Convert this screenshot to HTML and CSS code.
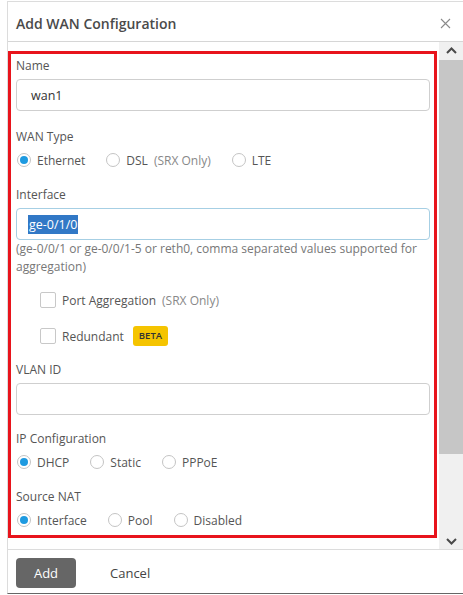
FILE: index.html
```html
<!DOCTYPE html>
<html lang="en">
<head>
    <meta charset="UTF-8">
    <meta name="viewport" content="width=device-width, initial-scale=1.0">
    <title>Add WAN Configuration</title>
    <link rel="stylesheet" href="styles.css">
</head>
<body>
    <div class="dialog">
        <!-- Cabecera -->
        <div class="dialog-header">
            <h2>Add WAN Configuration</h2>
            <span class="close">
                <svg width="11" height="11" viewBox="0 0 11 11"><path d="M1 1L10 10M10 1L1 10" stroke="#8a8a8a" stroke-width="1.1" fill="none"/></svg>
            </span>
        </div>

        <!-- Cuerpo con scroll -->
        <div class="dialog-body">
            <div class="scroll-content">
                <div class="form-box">
                    <div class="field name-field">
                        <div class="field-label">Name</div>
                        <div class="text-input">wan1</div>
                    </div>

                    <div class="field radio-field wan-type">
                        <div class="field-label">WAN Type</div>
                        <div class="radio-group">
                            <span class="radio-option"><span class="radio checked"></span>Ethernet</span>
                            <span class="radio-option"><span class="radio"></span>DSL <span class="note">(SRX Only)</span></span>
                            <span class="radio-option"><span class="radio"></span>LTE</span>
                        </div>
                    </div>

                    <div class="field-label">Interface</div>
                    <div class="text-input focused"><span class="selected">ge-0/1/0</span></div>
                    <div class="help">(ge-0/0/1 or ge-0/0/1-5 or reth0, comma separated values supported for aggregation)</div>

                    <div class="check-group">
                        <div class="check-option"><span class="checkbox"></span>Port Aggregation <span class="note">(SRX Only)</span></div>
                        <div class="check-option"><span class="checkbox"></span>Redundant <span class="badge">BETA</span></div>
                    </div>

                    <div class="field">
                        <div class="field-label">VLAN ID</div>
                        <div class="text-input"></div>
                    </div>

                    <div class="field radio-field">
                        <div class="field-label">IP Configuration</div>
                        <div class="radio-group">
                            <span class="radio-option"><span class="radio checked"></span>DHCP</span>
                            <span class="radio-option"><span class="radio"></span>Static</span>
                            <span class="radio-option"><span class="radio"></span>PPPoE</span>
                        </div>
                    </div>

                    <div class="field radio-field last">
                        <div class="field-label">Source NAT</div>
                        <div class="radio-group">
                            <span class="radio-option"><span class="radio checked"></span>Interface</span>
                            <span class="radio-option"><span class="radio"></span>Pool</span>
                            <span class="radio-option"><span class="radio"></span>Disabled</span>
                        </div>
                    </div>
                </div>
            </div>

            <!-- Barra de scroll -->
            <div class="scrollbar">
                <div class="sb-arrow">
                    <svg width="11" height="7" viewBox="0 0 11 7"><path d="M1 6L5.5 1.5L10 6" stroke="#4a4a4a" stroke-width="2" fill="none"/></svg>
                </div>
                <div class="sb-track"><div class="sb-thumb"></div></div>
                <div class="sb-arrow">
                    <svg width="11" height="7" viewBox="0 0 11 7"><path d="M1 1L5.5 5.5L10 1" stroke="#4a4a4a" stroke-width="2" fill="none"/></svg>
                </div>
            </div>
        </div>

        <!-- Pie -->
        <div class="dialog-footer">
            <button class="btn-add">Add</button>
            <button class="btn-cancel">Cancel</button>
        </div>
    </div>
</body>
</html>
```
FILE: styles.css
```css
body {
    margin: 0;
    background: #ffffff;
    font-family: "Open Sans", "Liberation Sans", sans-serif;
    font-size: 12px;
    color: #555;
}

.dialog {
    margin: 1px 0 0 7px;
    border: 1px solid #dcdcdc;
    border-right: none;
    border-bottom-color: #666;
}

/* Cabecera */
.dialog-header {
    display: flex;
    align-items: center;
    justify-content: space-between;
    padding: 3px 12px 0 8px;
    box-sizing: border-box;
    height: 40px;
    border-bottom: 1px solid #d6d6d6;
}

.dialog-header h2 {
    margin: 0;
    font-size: 14px;
    font-weight: 600;
    color: #4a4a4a;
}

.close {
    display: flex;
}

/* Cuerpo */
.dialog-body {
    display: flex;
    height: 507px;
    border-bottom: 1px solid #dcdcdc;
}

.scroll-content {
    flex: 1;
    padding: 9px 2px 0 0;
    overflow: hidden;
}

.form-box {
    border: 3px solid #e8141c;
    padding: 3px 4px 5px 5px;
}

.field {
    margin-bottom: 15px;
}

.name-field {
    margin-bottom: 17px;
}

.radio-field {
    margin-bottom: 16px;
}

.wan-type {
    margin-bottom: 16px;
}

.radio-field.last {
    margin-bottom: 0;
}

.field-label {
    line-height: 18px;
    margin-bottom: 4px;
    color: #555;
}

.text-input {
    height: 30px;
    border: 1px solid #cfcfcf;
    border-radius: 4px;
    padding: 0 14px;
    display: flex;
    align-items: center;
    color: #333;
    font-size: 12.5px;
}

.text-input.focused {
    border-color: #a6cfe4;
    padding-left: 11px;
}

.selected {
    background: #3178c6;
    color: #fff;
    padding: 1px 1px;
}

.help {
    line-height: 18px;
    color: #777;
}

/* Radios */
.radio-group {
    display: flex;
    gap: 20px;
    height: 20px;
    align-items: center;
    margin-top: 1px;
    color: #555;
}

.radio-option {
    display: flex;
    align-items: center;
}

.radio {
    width: 12px;
    height: 12px;
    border: 1px solid #c4c4c4;
    border-radius: 50%;
    margin: 0 6px 0 1px;
    position: relative;
}

.radio.checked::after {
    content: "";
    position: absolute;
    left: 2px;
    top: 2px;
    width: 8px;
    height: 8px;
    border-radius: 50%;
    background: #1e9ae0;
}

.note {
    color: #888;
    margin-left: 6px;
}

/* Checkboxes */
.check-group {
    padding-left: 24px;
    margin: 14px 0 15px;
}

.check-option {
    display: flex;
    align-items: center;
    height: 20px;
    margin-bottom: 16px;
}

.check-option:last-child {
    margin-bottom: 0;
}

.checkbox {
    width: 14px;
    height: 14px;
    border: 1px solid #c8c8c8;
    border-radius: 2px;
    margin-right: 6px;
}

.badge {
    background: #f5c400;
    color: #333;
    font-size: 9.5px;
    font-weight: 600;
    border-radius: 3px;
    padding: 0 6px;
    height: 20px;
    line-height: 20px;
    margin-left: 9px;
}

/* Scrollbar */
.scrollbar {
    width: 24px;
    display: flex;
    flex-direction: column;
    background: #f0f0f0;
}

.sb-arrow {
    height: 16px;
    display: flex;
    align-items: center;
    justify-content: center;
}

.sb-track {
    flex: 1;
}

.sb-thumb {
    margin-top: 2px;
    height: 394px;
    background: #c6c6c6;
}

/* Pie */
.dialog-footer {
    display: flex;
    align-items: center;
    height: 43px;
    padding-left: 8px;
}

.btn-add {
    width: 60px;
    height: 30px;
    background: #666;
    color: #fff;
    border: none;
    border-radius: 4px;
    font-family: inherit;
    font-size: 13px;
    margin-top: 2px;
}

.btn-cancel {
    background: none;
    border: none;
    font-family: inherit;
    font-size: 13px;
    color: #444;
    margin: 2px 0 0 34px;
    padding: 0;
}
```
